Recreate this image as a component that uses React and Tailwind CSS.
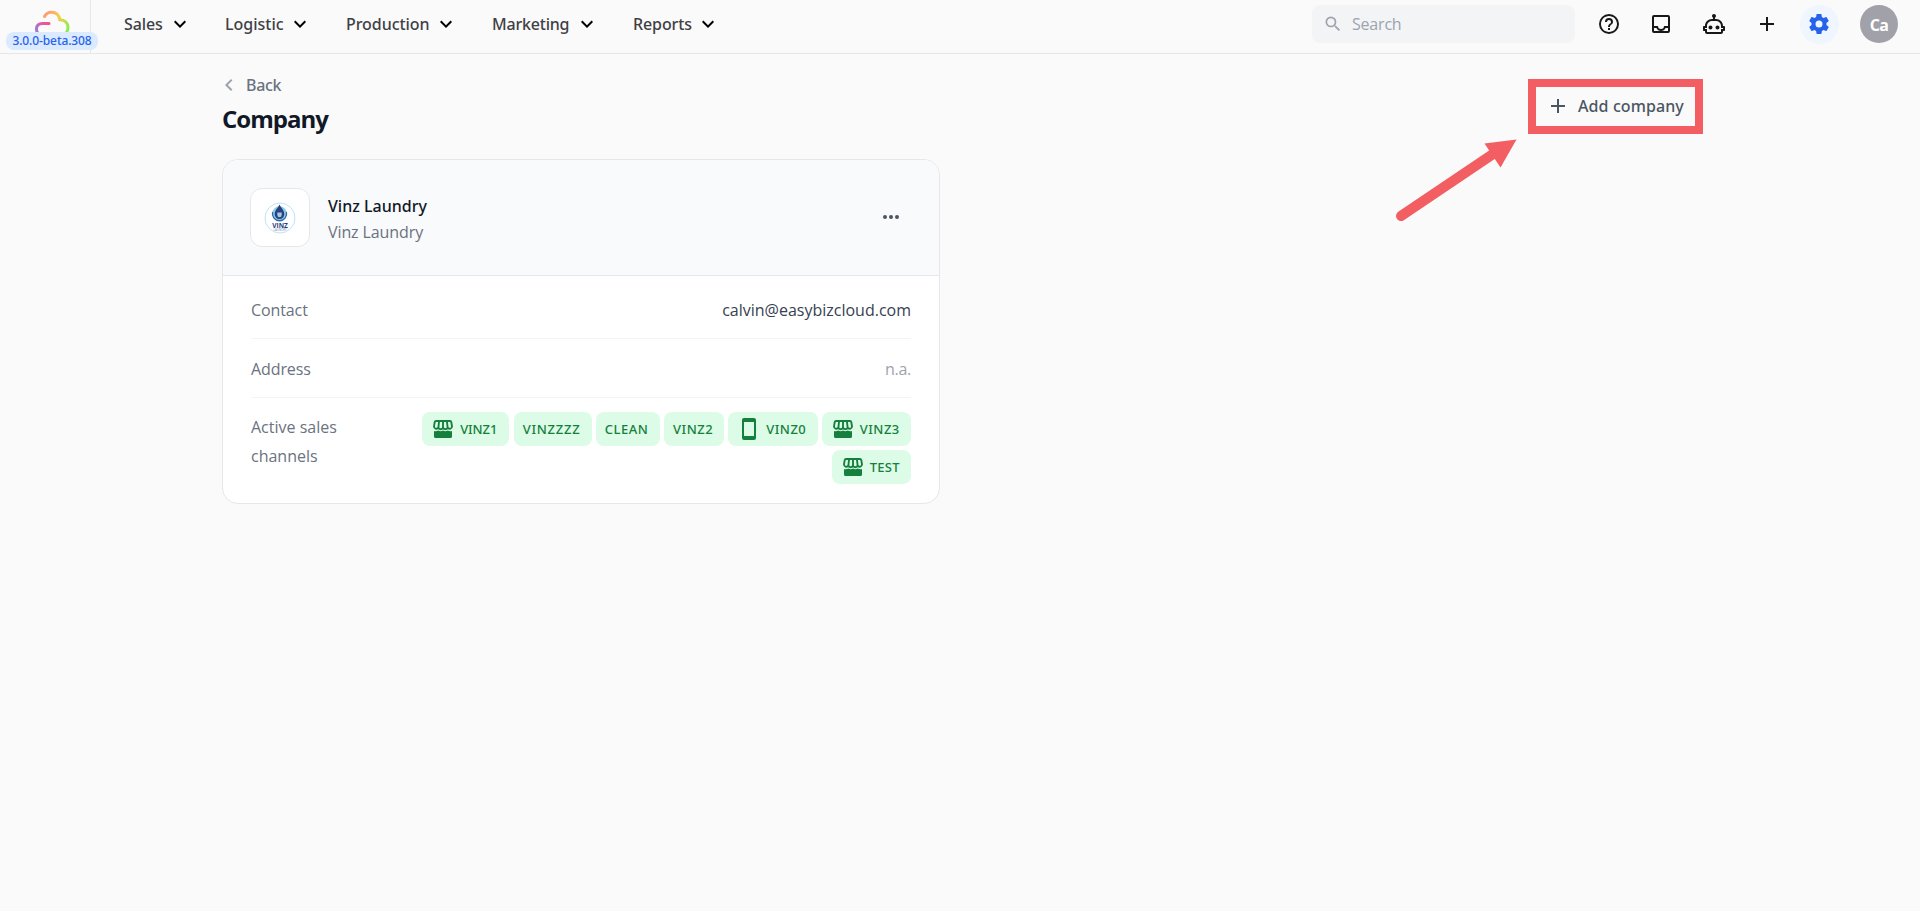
import React from 'react';

const icons = {
  chevronDown: 'M7.41,8.58L12,13.17L16.59,8.58L18,10L12,16L6,10L7.41,8.58Z',
  chevronLeft: 'M15.41,16.58L10.83,12L15.41,7.41L14,6L8,12L14,18L15.41,16.58Z',
  magnify:
    'M9.5,3A6.5,6.5 0 0,1 16,9.5C16,11.11 15.41,12.59 14.44,13.73L14.71,14H15.5L20.5,19L19,20.5L14,15.5V14.71L13.73,14.44C12.59,15.41 11.11,16 9.5,16A6.5,6.5 0 0,1 3,9.5A6.5,6.5 0 0,1 9.5,3M9.5,5C7,5 5,7 5,9.5C5,12 7,14 9.5,14C12,14 14,12 14,9.5C14,7 12,5 9.5,5Z',
  help: 'M11,18H13V16H11V18M12,2A10,10 0 0,0 2,12A10,10 0 0,0 12,22A10,10 0 0,0 22,12A10,10 0 0,0 12,2M12,20C7.59,20 4,16.41 4,12C4,7.59 7.59,4 12,4C16.41,4 20,7.59 20,12C20,16.41 16.41,20 12,20M12,6A4,4 0 0,0 8,10H10A2,2 0 0,1 12,8A2,2 0 0,1 14,10C14,12 11,11.75 11,15H13C13,12.75 16,12.5 16,10A4,4 0 0,0 12,6Z',
  inbox:
    'M5,3H19A2,2 0 0,1 21,5V19A2,2 0 0,1 19,21H5A2,2 0 0,1 3,19V5A2,2 0 0,1 5,3M5,5V14H9A3,3 0 0,0 15,14H19V5H5M5,16V19H19V16H16.58A5,5 0 0,1 7.42,16H5Z',
  robot:
    'M17.5 15.5C17.5 16.61 16.61 17.5 15.5 17.5S13.5 16.61 13.5 15.5 14.4 13.5 15.5 13.5 17.5 14.4 17.5 15.5M8.5 13.5C7.4 13.5 6.5 14.4 6.5 15.5S7.4 17.5 8.5 17.5 10.5 16.61 10.5 15.5 9.61 13.5 8.5 13.5M23 15V18C23 18.55 22.55 19 22 19H21V20C21 21.11 20.11 22 19 22H5C3.9 22 3 21.11 3 20V19H2C1.45 19 1 18.55 1 18V15C1 14.45 1.45 14 2 14H3C3 10.13 6.13 7 10 7H11V5.73C10.4 5.39 10 4.74 10 4C10 2.9 10.9 2 12 2S14 2.9 14 4C14 4.74 13.6 5.39 13 5.73V7H14C17.87 7 21 10.13 21 14H22C22.55 14 23 14.45 23 15M21 16H19V14C19 11.24 16.76 9 14 9H10C7.24 9 5 11.24 5 14V16H3V17H5V20H19V17H21V16Z',
  plus: 'M19,13H13V19H11V13H5V11H11V5H13V11H19V13Z',
  cog: 'M12,15.5A3.5,3.5 0 0,1 8.5,12A3.5,3.5 0 0,1 12,8.5A3.5,3.5 0 0,1 15.5,12A3.5,3.5 0 0,1 12,15.5M19.43,12.97C19.47,12.65 19.5,12.33 19.5,12C19.5,11.67 19.47,11.34 19.43,11L21.54,9.37C21.73,9.22 21.78,8.95 21.66,8.73L19.66,5.27C19.54,5.05 19.27,4.96 19.05,5.05L16.56,6.05C16.04,5.66 15.5,5.32 14.87,5.07L14.5,2.42C14.46,2.18 14.25,2 14,2H10C9.75,2 9.54,2.18 9.5,2.42L9.13,5.07C8.5,5.32 7.96,5.66 7.44,6.05L4.95,5.05C4.73,4.96 4.46,5.05 4.34,5.27L2.34,8.73C2.21,8.95 2.27,9.22 2.46,9.37L4.57,11C4.53,11.34 4.5,11.67 4.5,12C4.5,12.33 4.53,12.65 4.57,12.97L2.46,14.63C2.27,14.78 2.21,15.05 2.34,15.27L4.34,18.73C4.46,18.95 4.73,19.03 4.95,18.95L7.44,17.94C7.96,18.34 8.5,18.68 9.13,18.93L9.5,21.58C9.54,21.82 9.75,22 10,22H14C14.25,22 14.46,21.82 14.5,21.58L14.87,18.93C15.5,18.67 16.04,18.34 16.56,17.94L19.05,18.95C19.27,19.03 19.54,18.95 19.66,18.73L21.66,15.27C21.78,15.05 21.73,14.78 21.54,14.63L19.43,12.97Z',
  dots: 'M16,12A2,2 0 0,1 18,10A2,2 0 0,1 20,12A2,2 0 0,1 18,14A2,2 0 0,1 16,12M10,12A2,2 0 0,1 12,10A2,2 0 0,1 14,12A2,2 0 0,1 12,14A2,2 0 0,1 10,12M4,12A2,2 0 0,1 6,10A2,2 0 0,1 8,12A2,2 0 0,1 6,14A2,2 0 0,1 4,12Z',
  phone:
    'M17,19H7V5H17M17,1H7C5.89,1 5,1.89 5,3V21A2,2 0 0,0 7,23H17A2,2 0 0,0 19,21V3C19,1.89 18.1,1 17,1Z',
};

function Icon({ name, className = 'w-6 h-6' }) {
  return (
    <svg viewBox="0 0 24 24" fill="currentColor" fillRule="evenodd" className={`shrink-0 ${className}`}>
      <path d={icons[name]} />
    </svg>
  );
}

function StoreIcon() {
  return (
    <svg viewBox="0 0 24 24" fill="none" className="w-6 h-6 shrink-0">
      <path
        d="M5 4H19Q20 4 20.3 5.2L21 9.4A2.3 2.3 0 0 1 16.6 10.4A2.35 2.35 0 0 1 12 10.4A2.35 2.35 0 0 1 7.4 10.4A2.3 2.3 0 0 1 3 9.4L3.7 5.2Q4 4 5 4Z M8.1 4L7.4 10.4 M12 4V10.4 M15.9 4L16.6 10.4"
        stroke="currentColor"
        strokeWidth="1.9"
      />
      <path
        d="M3 14.1Q5.2 14.6 7.4 13.6Q9.7 15 12 13.6Q14.3 15 16.6 13.6Q18.8 14.6 21 14.1V19.5A1.5 1.5 0 0 1 19.5 21H4.5A1.5 1.5 0 0 1 3 19.5Z"
        fill="currentColor"
      />
    </svg>
  );
}

function CloudLogo() {
  return (
    <svg viewBox="0 0 36 26" fill="none" className="w-9 h-[26px]" strokeWidth="3" strokeLinecap="round">
      <defs>
        <linearGradient id="cloudTop" x1="9" y1="0" x2="34" y2="22" gradientUnits="userSpaceOnUse">
          <stop stopColor="#ff8a80" />
          <stop offset=".45" stopColor="#fcc94f" />
          <stop offset="1" stopColor="#7df24a" />
        </linearGradient>
        <linearGradient id="cloudLeft" x1="16" y1="13" x2="2" y2="22" gradientUnits="userSpaceOnUse">
          <stop stopColor="#ff4d7d" />
          <stop offset=".55" stopColor="#d65fb0" />
          <stop offset="1" stopColor="#8f7fe0" />
        </linearGradient>
      </defs>
      <path d="M10.500 6.500C12 3.800 14.400 2.300 17.600 2.300C22 2.300 25 5.200 25.800 9.800C31 10 34 13 34 17.400C34 22 31 24.500 27 24.500" stroke="url(#cloudTop)" />
      <path d="M15 13.400H8.600C4.800 13.400 2.400 15.600 2.400 19S4.600 24.500 8 24.500" stroke="url(#cloudLeft)" />
    </svg>
  );
}

function VinzLogo() {
  return (
    <svg viewBox="0 0 32 32" className="w-8 h-8" fill="none">
      <circle cx="16" cy="16" r="15" stroke="#bfe3f5" strokeWidth="1" />
      <circle cx="15.5" cy="11.6" r="7.3" fill="#8cc8ea" />
      <path d="M8.6 10A7.1 7.1 0 1 0 22.4 10" stroke="#2f6da8" strokeWidth="1.3" />
      <path d="M15.5 2.5C17.5 6.5 20.3 8.5 20.3 12.3A4.8 4.8 0 0 1 10.7 12.3C10.7 8.5 13.5 6.5 15.5 2.5Z" fill="#27437f" />
      <path d="M13.3 10.5H17.7V13A2.2 2.2 0 0 1 13.3 13Z" fill="#a9c8e2" />
      <text x="16" y="26" textAnchor="middle" fontFamily="Open Sans, sans-serif" fontSize="6.6" fontWeight="700" fill="#273f7c" textLength="15.5">
        VINZ
      </text>
      <text x="16" y="29" textAnchor="middle" fontFamily="Open Sans, sans-serif" fontSize="2.8" fill="#6f87b0" textLength="13">
        LAUNDRY
      </text>
    </svg>
  );
}

const menus = [
  { label: 'Sales', width: 'w-[101px]', text: 'w-[39px] tracking-[-0.1px]' },
  { label: 'Logistic', width: 'w-[121px]', text: 'w-[58px] tracking-[0px]' },
  { label: 'Production', width: 'w-[146px]', text: 'w-[83px] tracking-[-0.05px]' },
  { label: 'Marketing', width: 'w-[141px]', text: 'w-[78px] tracking-[-0.2px]' },
  { label: 'Reports', width: 'w-[121px]', text: 'w-[58px] tracking-[-0.1px]' },
];

const channels = [
  { name: 'VINZ1', type: 'store', width: 'w-[87.3px]' },
  { name: 'VINZZZZ', width: 'w-[78px] tracking-[0.75px]' },
  { name: 'CLEAN', width: 'w-[64px] tracking-[0.5px]' },
  { name: 'VINZ2', width: 'w-[60px] tracking-[0.5px]' },
  { name: 'VINZ0', type: 'phone', width: 'w-[89.3px] tracking-[0.5px]' },
  { name: 'VINZ3', type: 'store', width: 'w-[89.3px] tracking-[0.5px]' },
  { name: 'TEST', type: 'store', width: 'w-[79.3px] tracking-[0.3px]' },
];

function Header() {
  return (
    <header className="h-[54px] flex border-b border-[#e5e7eb]">
      <div className="relative w-[91px] border-r border-[#e5e7eb] pt-[10px] pl-[34px] shrink-0">
        <CloudLogo />
        <span className="absolute left-[6px] top-[32px] w-[92px] h-[18px] rounded-lg bg-[#dbeafe] text-[#2563eb] text-[12px] leading-[18px] font-['Noto_Sans'] font-medium tracking-[-0.1px] text-center whitespace-nowrap">
          3.0.0-beta.308
        </span>
      </div>
      <nav className="flex pl-[33px] h-12 items-center text-[#3f3f46] font-['Noto_Sans'] font-medium">
        {menus.map((menu) => (
          <button key={menu.label} className={`flex items-center ${menu.width}`}>
            <span className={`text-left whitespace-nowrap ${menu.text}`}>{menu.label}</span>
            <Icon name="chevronDown" className="w-6 h-6 ml-[5px] text-black" />
          </button>
        ))}
      </nav>
      <div className="ml-auto flex items-center h-12 pr-[22px] text-[#18181b]">
        <div className="w-[263px] h-[38px] rounded-lg bg-[#f3f4f6] flex items-center pl-[11px] gap-[9px] text-[#9ca3af] mr-[22px]">
          <Icon name="magnify" className="w-5 h-5" />
          <span className="tracking-[-0.2px]">Search</span>
        </div>
        <div className="flex items-center gap-[29px]">
          <Icon name="help" className="w-6 h-6 -mr-px" />
          <Icon name="inbox" />
          <Icon name="robot" />
          <Icon name="plus" />
        </div>
        <div className="w-[39px] h-[39px] rounded-full bg-[#eff6ff] text-[#2563eb] flex items-center pl-[7px] ml-[21px]">
          <Icon name="cog" />
        </div>
        <div className="w-[38px] h-[38px] rounded-full bg-[#a1a1aa] text-white font-bold flex items-center justify-center ml-[21px] pt-0.5 tracking-[-0.8px]">
          Ca
        </div>
      </div>
    </header>
  );
}

function Row({ label, children }) {
  return (
    <div className="h-[59px] pt-0.5 flex items-center justify-between border-b border-[#f3f4f6]">
      <span className="text-[#6b7280]">{label}</span>
      {children}
    </div>
  );
}

function CompanyCard() {
  return (
    <div className="w-[718px] h-[345px] rounded-2xl border border-[#e5e7eb] bg-white overflow-hidden">
      <div className="h-[116px] bg-[#f9fafc] border-b border-[#e5e7eb] flex items-center pl-[27px] pr-9">
        <div className="w-[60px] h-[59px] rounded-xl border border-[#e5e7eb] bg-white flex items-center justify-center">
          <VinzLogo />
        </div>
        <div className="ml-[18px] leading-[26px] pt-[3px]">
          <div className="text-[#111827] font-['Noto_Sans'] font-medium tracking-[0px]">Vinz Laundry</div>
          <div className="text-[#6b7280]">Vinz Laundry</div>
        </div>
        <Icon name="dots" className="w-6 h-6 ml-auto mb-px text-[#4b5563]" />
      </div>
      <div className="px-7 pt-1">
        <Row label="Contact">
          <span className="text-[#374151] tracking-[0px]">calvin@easybizcloud.com</span>
        </Row>
        <Row label="Address">
          <span className="text-[#9ca3af] tracking-[-0.3px]">n.a.</span>
        </Row>
        <div className="flex justify-between pt-[14px]">
          <span className="w-[120px] pt-px text-[#6b7280] leading-[29px] tracking-[0px]">Active sales channels</span>
          <div className="flex flex-wrap justify-end gap-x-[4.2px] gap-y-1 w-[500px]">
            {channels.map((channel) => (
              <span
                key={channel.name}
                className={`h-[34px] rounded-lg bg-[#dcfce7] text-[#15803d] text-[13px] font-['Noto_Sans'] font-medium flex items-center px-[9px] gap-[5px] whitespace-nowrap ${channel.width}`}
              >
                {channel.type === 'store' && <StoreIcon />}
                {channel.type === 'phone' && <Icon name="phone" />}
                <span className="pt-px">{channel.name}</span>
              </span>
            ))}
          </div>
        </div>
      </div>
    </div>
  );
}

export default function App() {
  return (
    <div className="relative min-h-screen bg-[#fafafa] font-['Open_Sans',sans-serif] text-base tracking-[-0.1px]">
      <Header />
      <main className="w-[1481px] ml-[222px]">
        <div className="h-[105px] flex justify-between">
          <div className="pt-[19px]">
            <div className="flex items-center gap-[5px] h-6 -ml-[5px] text-[#6b7280] font-['Noto_Sans'] font-medium tracking-[-0.3px]">
              <Icon name="chevronLeft" className="w-6 h-6 text-[#9ca3af]" />
              Back
            </div>
            <h1 className="mt-[6px] text-2xl leading-8 font-bold text-[#111827] tracking-[-1px]">Company</h1>
          </div>
          <button className="mt-[25px] w-[175px] h-[55px] border-8 border-[#f25e62] text-[#4b5563] font-['Noto_Sans'] font-medium tracking-[0.1px] flex items-center pl-[10px] pb-px gap-2 whitespace-nowrap">
            <Icon name="plus" />
            Add company
          </button>
        </div>
        <CompanyCard />
      </main>

      {/* Pointer to the add button */}
      <svg viewBox="0 0 124 86" className="absolute left-[1394px] top-[138px] w-[124px] h-[86px]">
        <path d="M7 78L102 14" stroke="#f25e62" strokeWidth="10" strokeLinecap="round" />
        <path d="M90.5 5.5L122.5 1.5L106.5 29.5Z" fill="#f25e62" />
      </svg>
    </div>
  );
}
